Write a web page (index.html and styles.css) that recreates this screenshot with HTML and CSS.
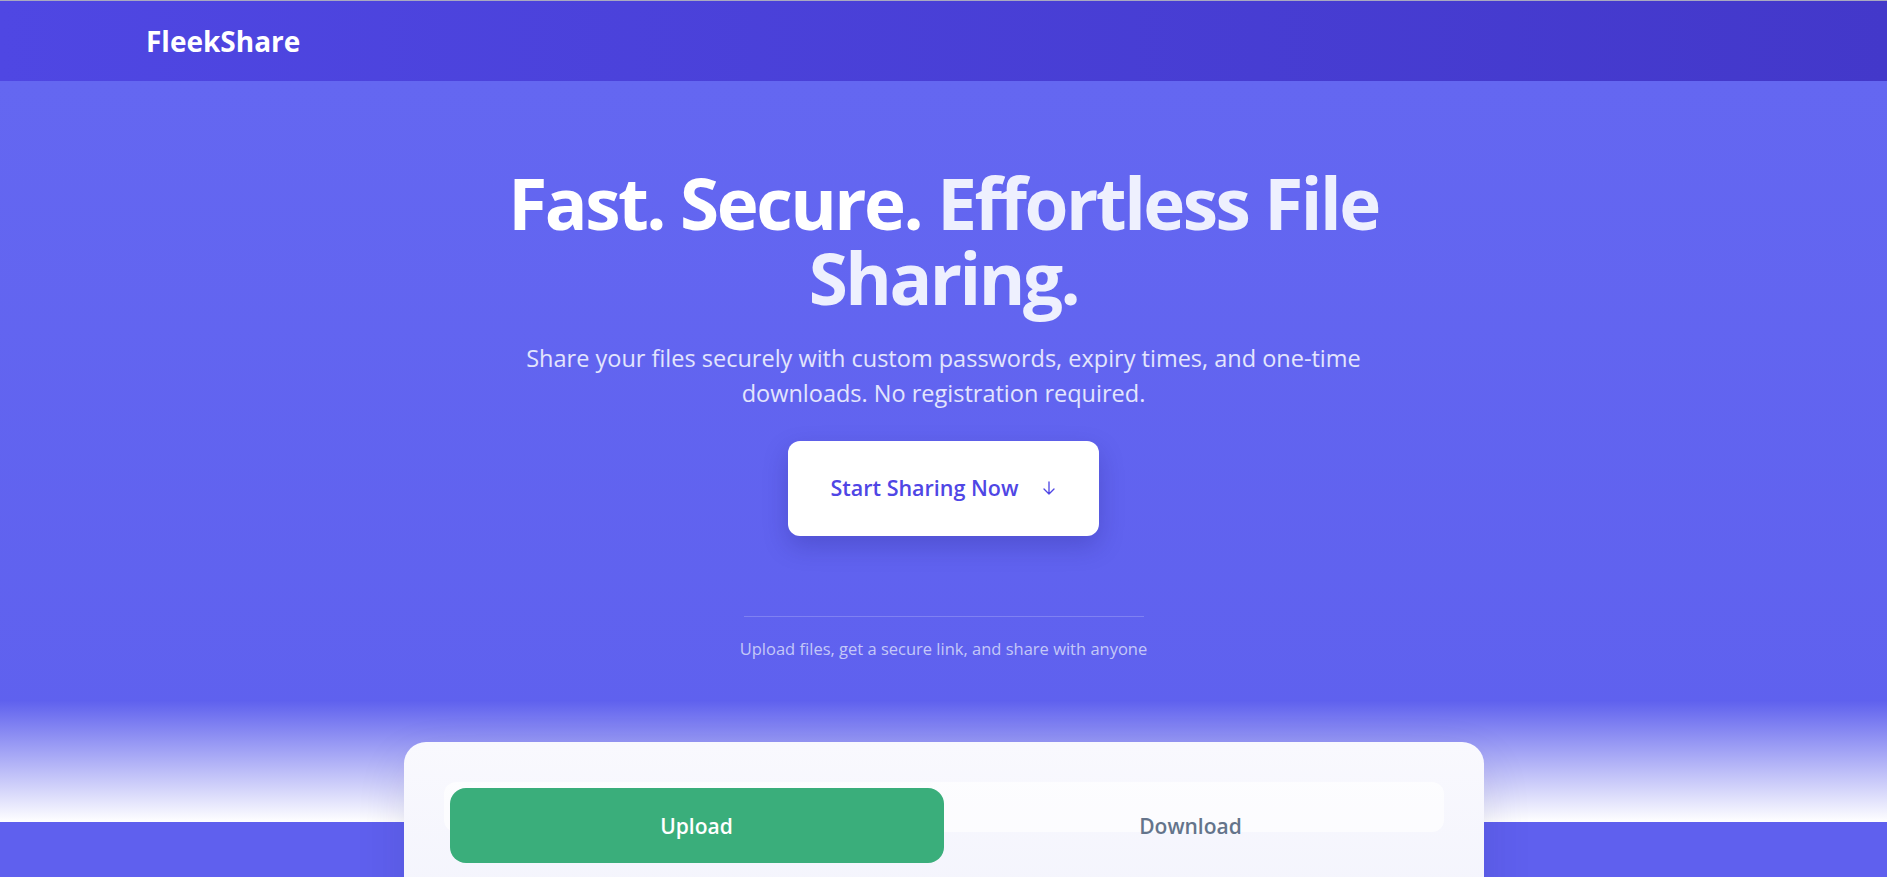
FILE: index.html
```html
<!DOCTYPE html>
<html lang="en">
<head>
    <meta charset="UTF-8">
    <meta name="viewport" content="width=device-width, initial-scale=1.0">
    <title>FleekShare - Secure File Sharing</title>
    <link rel="stylesheet" href="styles.css">
</head>
<body>
    <header class="site-header">
        <div class="header-inner">
            <a class="logo" href="#">FleekShare</a>
        </div>
    </header>

    <section class="hero">
        <div class="hero-content">
            <h1 class="hero-title"><span class="title-white">Fast. Secure.</span> <span class="title-soft">Effortless File</span> <span class="title-soft">Sharing.</span></h1>
            <p class="hero-sub">Share your files securely with custom passwords, expiry times, and one-time downloads. No registration required.</p>
            <a class="cta" href="#share">
                Start Sharing Now
                <svg class="cta-icon" viewBox="0 0 24 24" fill="none" stroke="currentColor" stroke-width="2" stroke-linecap="round" stroke-linejoin="round">
                    <path d="M19.5 13.5 12 21m0 0-7.5-7.5M12 21V3"/>
                </svg>
            </a>
            <div class="hero-divider"></div>
            <p class="hero-note">Upload files, get a secure link, and share with anyone</p>
        </div>
        <!-- fade into the card section -->
        <div class="hero-fade"></div>
    </section>

    <main class="share-section" id="share">
        <div class="share-card">
            <div class="tabs">
                <button class="tab active">Upload</button>
                <button class="tab">Download</button>
            </div>
            <div class="card-body"></div>
        </div>
    </main>
</body>
</html>
```

FILE: styles.css
```css
* {
    box-sizing: border-box;
}
body {
    margin: 0;
    font-family: "Segoe UI", "Open Sans", sans-serif;
    background-color: #5f60ee;
}
.site-header {
    height: 81px;
    border-top: 1px solid #a9a9c0;
    background: linear-gradient(90deg, #4f47e3, #4338ca);
    display: flex;
    align-items: center;
}
.header-inner {
    width: 100%;
    padding: 0 146px;
}
.logo {
    color: #fff;
    font-size: 28px;
    font-weight: 700;
    text-decoration: none;
}

/* Hero */
.hero {
    background: linear-gradient(180deg, #6467f1, #5e60ee);
}
.hero-content {
    padding: 84px 20px 39px;
    display: flex;
    flex-direction: column;
    align-items: center;
    text-align: center;
}
.hero-title {
    margin: 0;
    max-width: 940px;
    font-size: 71px;
    line-height: 75px;
    font-weight: 700;
    letter-spacing: -0.035em;
}
.hero-title span {
    display: inline-block;
    height: 75px;
}
.title-white {
    color: #fff;
}
.title-soft {
    color: #eef0fe;
}
.hero-sub {
    margin: 26px 0 0;
    max-width: 900px;
    font-size: 23.5px;
    line-height: 35px;
    color: #e3e5fd;
}
.cta {
    margin-top: 30px;
    display: inline-flex;
    align-items: center;
    padding: 33px 42px 34px;
    background-color: #fff;
    color: #4f46e5;
    font-size: 21.5px;
    line-height: 28px;
    font-weight: 600;
    text-decoration: none;
    border-radius: 12px;
    box-shadow: 0 10px 25px rgba(30, 27, 120, 0.25);
}
.cta-icon {
    width: 16px;
    height: 16px;
    margin-left: 22px;
}
.hero-divider {
    margin-top: 80px;
    width: 400px;
    height: 1px;
    background-color: rgba(255, 255, 255, 0.2);
}
.hero-note {
    margin: 20px 0 0;
    font-size: 16.5px;
    line-height: 24px;
    color: #c4c8f8;
}
.hero-fade {
    height: 122px;
    background: linear-gradient(180deg, #5e60ee, #ffffff);
}

/* Share card */
.share-section {
    display: flex;
    justify-content: center;
    padding: 0 20px 40px;
}
.share-card {
    margin-top: -80px;
    width: 1080px;
    padding: 40px;
    border-radius: 22px;
    background: linear-gradient(180deg, #f9f9fe, #eeeffb);
    box-shadow: 0 20px 50px rgba(30, 27, 100, 0.12);
}
.tabs {
    display: flex;
    height: 50px;
    padding: 6px;
    border-radius: 12px;
    background-color: rgba(255, 255, 255, 0.65);
}
.tab {
    flex: 1;
    height: 75px;
    border: none;
    border-radius: 16px;
    background: transparent;
    font-family: inherit;
    font-size: 21px;
    font-weight: 600;
    color: #64748b;
    cursor: pointer;
}
.tab.active {
    background-color: #3aae7b;
    color: #fff;
}
.card-body {
    height: 200px;
}
```
